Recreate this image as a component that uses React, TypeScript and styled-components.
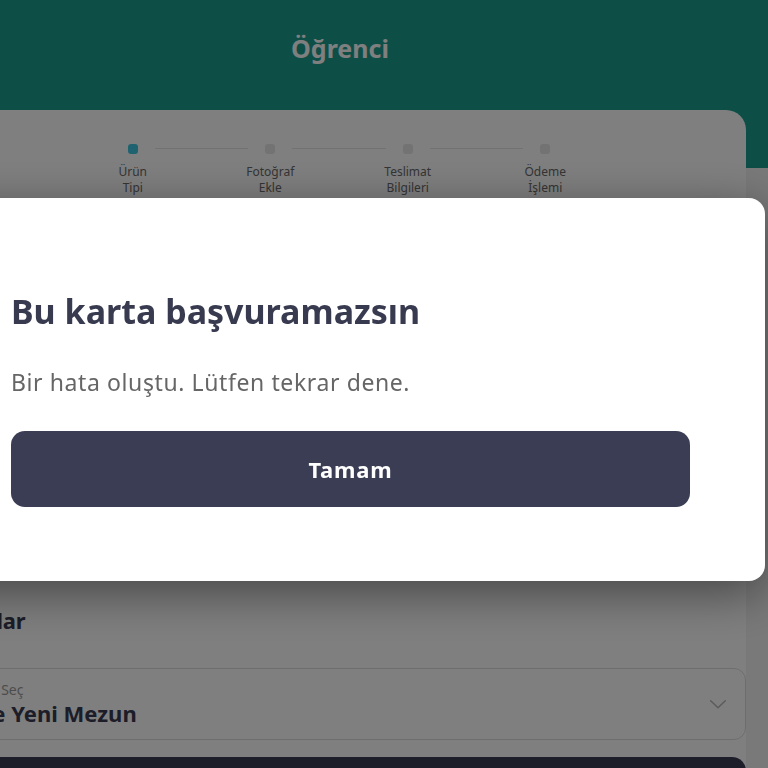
import styled, { createGlobalStyle } from "styled-components";

const GlobalStyle = createGlobalStyle`
  html, body {
    margin: 0;
    padding: 0;
    overflow: hidden;
    background: #f2f2f2;
    font-family: "Noto Sans", "Open Sans", sans-serif;
  }
`;

const Shell = styled.div`
  width: 917px;
  margin-left: -149px;
  height: 768px;
`;

const Header = styled.header`
  height: 168px;
  padding: 0 22px 0 83px;
  background: #1a9c8f;
  display: flex;
  justify-content: center;
  box-sizing: border-box;
`;

const Title = styled.h1`
  margin: 33px 0 0;
  font-size: 25px;
  line-height: 30px;
  font-weight: 700;
  color: #ffffff;
`;

const Card = styled.main`
  margin: -58px 22px 0 0;
  background: #ffffff;
  border-radius: 20px;
  padding: 34px 0 0 24px;
`;

const Stepper = styled.ol`
  list-style: none;
  margin: 0 0 0 189px;
  padding: 0;
  width: 550px;
  display: grid;
  grid-template-columns: repeat(4, 1fr);
`;

const Step = styled.li<{ $last?: boolean }>`
  position: relative;
  display: flex;
  flex-direction: column;
  align-items: center;

  &::after {
    content: "";
    display: ${(p) => (p.$last ? "none" : "block")};
    position: absolute;
    top: 4px;
    left: calc(50% + 22px);
    width: calc(100% - 44px);
    height: 1px;
    background: #e4e4e4;
  }
`;

const Dot = styled.span<{ $active?: boolean }>`
  width: 10px;
  height: 10px;
  border-radius: 3px;
  background: ${(p) => (p.$active ? "#3fc6e0" : "#e6e6e6")};
`;

const StepLabel = styled.span`
  margin-top: 10px;
  font-size: 12px;
  line-height: 16px;
  color: #6a6a6a;
  text-align: center;
  white-space: pre-line;
`;

const Section = styled.section`
  margin-top: 410px;
`;

const SectionTitle = styled.h2`
  margin: 0;
  font-size: 22px;
  line-height: 28px;
  font-weight: 700;
  letter-spacing: -0.3px;
  color: #383b50;
`;

const Select = styled.div`
  margin-top: 34px;
  height: 72px;
  box-sizing: border-box;
  border: 1px solid #dcdcdc;
  border-radius: 12px;
  padding: 0 16px 0 12px;
  display: flex;
  align-items: center;
  justify-content: space-between;
`;

const SelectText = styled.div`
  display: flex;
  flex-direction: column;
`;

const SelectHint = styled.span`
  font-size: 14px;
  line-height: 18px;
  color: #9a9a9a;
`;

const SelectValue = styled.span`
  font-size: 22px;
  line-height: 28px;
  font-weight: 700;
  color: #383b50;
`;

const PrimaryButton = styled.button<{ $height?: number }>`
  display: block;
  width: 100%;
  height: ${(p) => p.$height ?? 64}px;
  border: 0;
  border-radius: 14px;
  background: #3a3d54;
  color: #ffffff;
  font-family: inherit;
  font-size: 22px;
  font-weight: 700;
  letter-spacing: 0.8px;
  cursor: pointer;
`;

const BottomButton = styled(PrimaryButton)`
  margin-top: 17px;
`;

const Overlay = styled.div`
  position: fixed;
  inset: 0;
  padding-top: 11px;
  background: rgba(0, 0, 0, 0.5);
  display: flex;
  align-items: center;
`;

const Modal = styled.div`
  margin-left: -64px;
  width: 829px;
  box-sizing: border-box;
  padding: 93px 75px 74px;
  background: #ffffff;
  border-radius: 16px;
  box-shadow: 0 12px 48px rgba(0, 0, 0, 0.45);
`;

const ModalTitle = styled.h2`
  margin: 0;
  font-size: 34px;
  line-height: 40px;
  font-weight: 700;
  color: #383b50;
`;

const ModalText = styled.p`
  margin: 37px 0 35px;
  font-size: 23px;
  line-height: 28px;
  letter-spacing: 0.6px;
  color: #666666;
`;

const steps = ["Ürün\nTipi", "Fotoğraf\nEkle", "Teslimat\nBilgileri", "Ödeme\nİşlemi"];

export default function App() {
  return (
    <>
      <GlobalStyle />
      <Shell>
        <Header>
          <Title>Öğrenci</Title>
        </Header>
        <Card>
          <Stepper>
            {steps.map((s, i) => (
              <Step key={s} $last={i === steps.length - 1}>
                <Dot $active={i === 0} />
                <StepLabel>{s}</StepLabel>
              </Step>
            ))}
          </Stepper>
          <Section>
            <SectionTitle>Uygun Kartlar</SectionTitle>
            <Select>
              <SelectText>
                <SelectHint>Kart Kategorisini Seç</SelectHint>
                <SelectValue>Öğrenci ve Yeni Mezun</SelectValue>
              </SelectText>
              <svg width="22" height="22" viewBox="0 0 24 24" fill="none" stroke="#b5b5b5" strokeWidth="1.6" strokeLinecap="round" strokeLinejoin="round">
                <path d="M4 8.5l8 7.5 8-7.5" />
              </svg>
            </Select>
            <BottomButton>Devam</BottomButton>
          </Section>
        </Card>
      </Shell>
      <Overlay>
        <Modal role="dialog">
          <ModalTitle>Bu karta başvuramazsın</ModalTitle>
          <ModalText>Bir hata oluştu. Lütfen tekrar dene.</ModalText>
          <PrimaryButton $height={76}>Tamam</PrimaryButton>
        </Modal>
      </Overlay>
    </>
  );
}
